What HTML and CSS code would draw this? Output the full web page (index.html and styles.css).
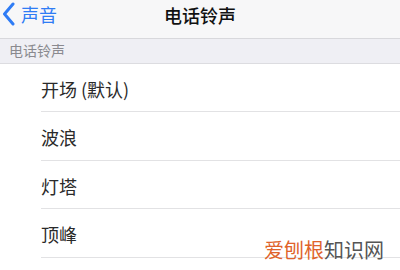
FILE: index.html
```html
<!DOCTYPE html>
<html lang="zh-CN">
<head>
    <meta charset="UTF-8">
    <title>电话铃声</title>
    <link rel="stylesheet" href="styles.css">
</head>
<body>
    <div class="navbar">
        <div class="back">
            <svg class="chevron" width="13" height="24" viewBox="0 0 13 24">
                <path d="M11 2 L2.5 12 L11 22" fill="none" stroke="#2f7cf5" stroke-width="3" stroke-linecap="round" stroke-linejoin="round"/>
            </svg>
            <span>声音</span>
        </div>
        <div class="title">电话铃声</div>
    </div>

    <div class="section-header">电话铃声</div>

    <ul class="list">
        <li>开场 (默认)</li>
        <li>波浪</li>
        <li>灯塔</li>
        <li>顶峰</li>
    </ul>

    <div class="watermark"><span class="orange">爱刨根</span>知识网</div>
</body>
</html>
```

FILE: styles.css
```css
body {
    margin: 0;
    width: 400px;
    height: 270px;
    overflow: hidden;
    background-color: #fff;
    font-family: "Noto Sans CJK SC", "Liberation Sans", sans-serif;
    position: relative;
}
.navbar {
    height: 38px;
    background-color: #f7f7f8;
    border-bottom: 1px solid #d8d8dc;
    position: relative;
    display: flex;
    align-items: center;
    justify-content: center;
}
.back {
    position: absolute;
    left: 2px;
    top: 2px;
    display: flex;
    align-items: center;
    gap: 6px;
    color: #2f7cf5;
    font-size: 18px;
    line-height: 24px;
}
.title {
    font-size: 18px;
    font-weight: 500;
    color: #111;
    margin-top: -8px;
}
.section-header {
    height: 24px;
    background-color: #efeff4;
    border-bottom: 1px solid #dcdce0;
    color: #8a8a8f;
    font-size: 14px;
    line-height: 22px;
    padding-left: 9px;
}
.list {
    list-style: none;
    margin: 0;
    padding: 0 0 0 41px;
}
.list li {
    height: 47.4px;
    border-bottom: 1px solid #e2e2e4;
    font-size: 18px;
    line-height: 50px;
    color: #2a2a2a;
}
.watermark {
    position: absolute;
    right: 16px;
    bottom: 10px;
    font-size: 20px;
    line-height: 20px;
    color: #555;
}
.orange {
    color: #e0632b;
}
```
